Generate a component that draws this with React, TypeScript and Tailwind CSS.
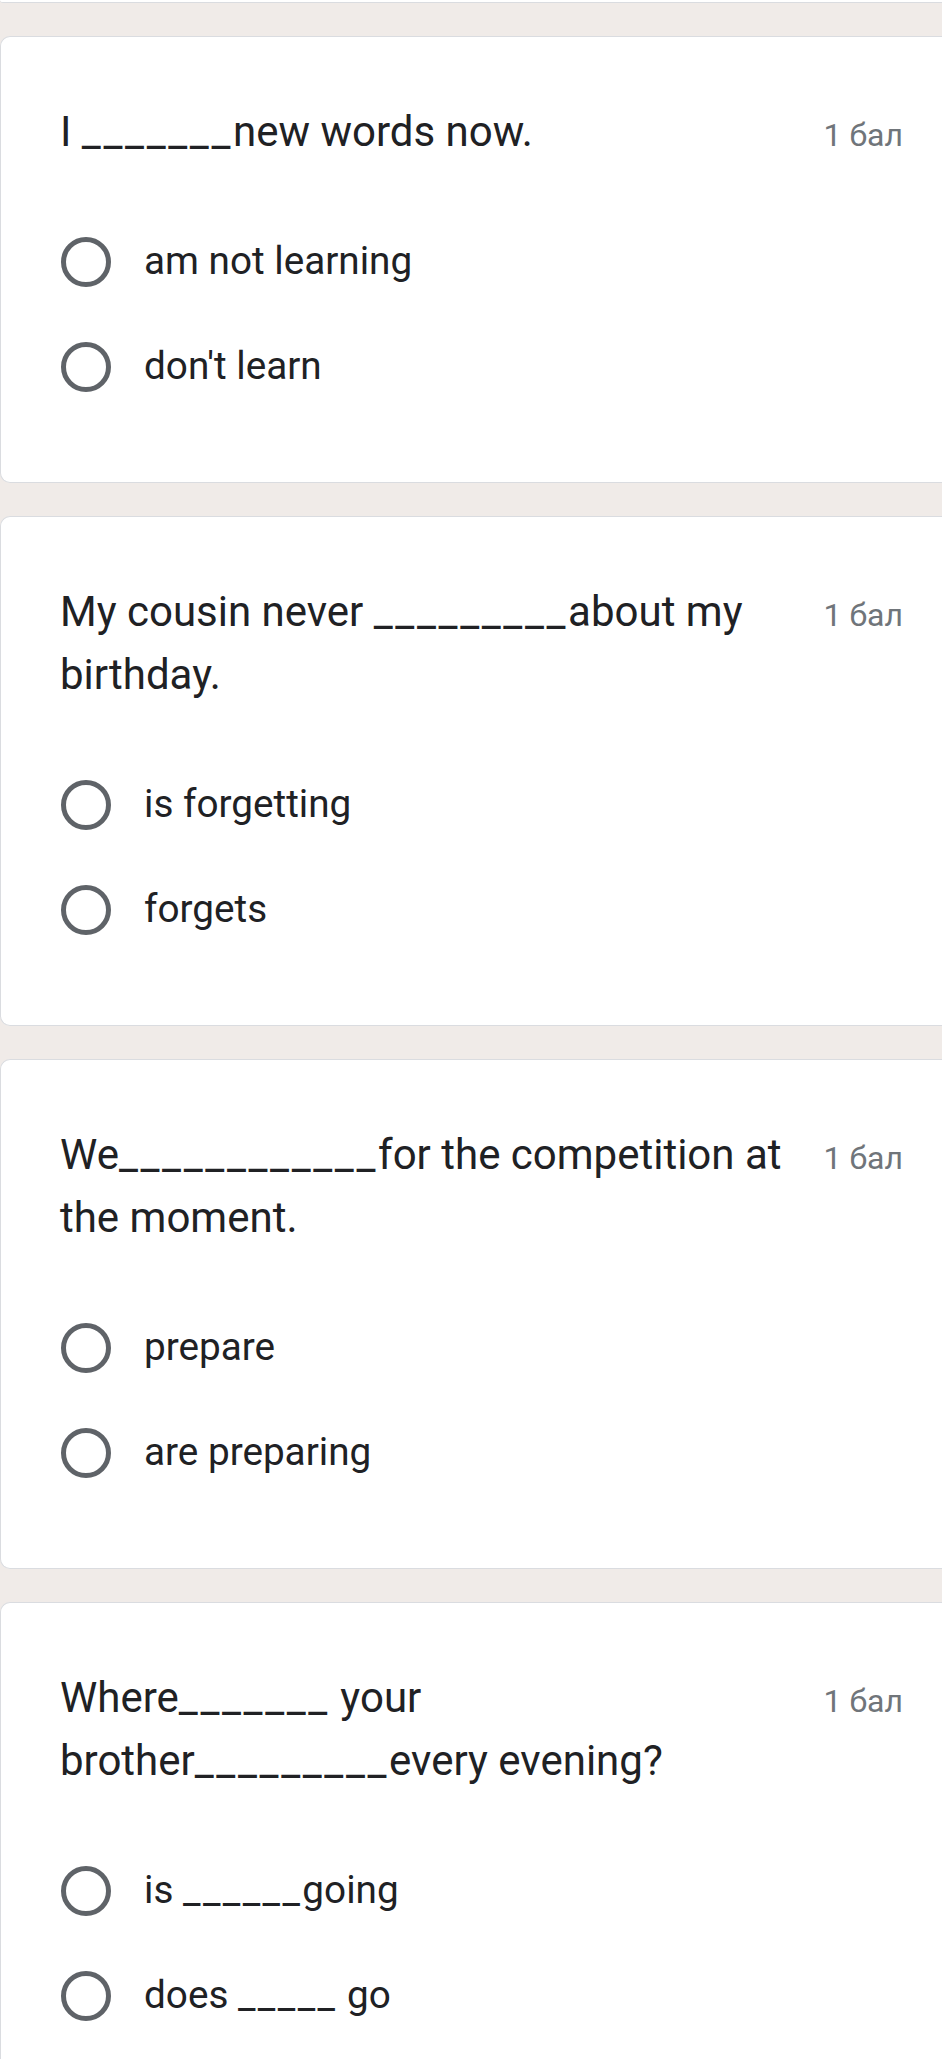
import React from "react";

interface Question {
    title: string;
    options: string[];
}

const questions: Question[] = [
    { title: "I _______new words now.", options: ["am not learning", "don't learn"] },
    { title: "My cousin never _________about my birthday.", options: ["is forgetting", "forgets"] },
    { title: "We____________for the competition at the moment.", options: ["prepare", "are preparing"] },
    { title: "Where_______ your brother_________every evening?", options: ["is ______going", "does _____ go"] },
];

// blanks are drawn as separate dashes, like in the form
function Blanks({ text }: { text: string }) {
    const parts = text.split(/(_+)/);
    return (
        <>
            {parts.map((part, i) =>
                part.startsWith("_") ? (
                    <span key={i} className="tracking-[0.063em]">{part}</span>
                ) : (
                    <React.Fragment key={i}>{part}</React.Fragment>
                )
            )}
        </>
    );
}

function Radio() {
    return <div className="ml-[1px] mr-[33px] h-[50px] w-[50px] shrink-0 rounded-full border-[5px] border-[#5f6368]" />;
}

function QuestionCard({ question }: { question: Question }) {
    return (
        <div className="rounded-l-[10px] border border-r-0 border-[#dadce0] bg-white pl-[59px] pr-[39px] pt-[63px] pb-[63px]">
            <div className="flex items-baseline gap-6">
                <div className="flex-1 text-[42px] leading-[63px] text-[#202124]">
                    <Blanks text={question.title} />
                </div>
                <div className="shrink-0 text-[32px] text-[#70757a]">1 бал</div>
            </div>
            <div className="mt-[46px] flex flex-col">
                {question.options.map((option) => (
                    <div key={option} className="flex h-[105px] items-center">
                        <Radio />
                        <span className="text-[38.7px] text-[#202124]">
                            <Blanks text={option} />
                        </span>
                    </div>
                ))}
            </div>
        </div>
    );
}

export default function App() {
    return (
        <div className="h-[2059px] overflow-hidden bg-[#f0ebe8] font-['Roboto',sans-serif]">
            <div className="mb-[33px] h-[3px] rounded-bl-[10px] border-b border-[#dadce0] bg-white" />
            <div className="flex flex-col gap-[33px]">
                {questions.map((q) => (
                    <QuestionCard key={q.title} question={q} />
                ))}
            </div>
        </div>
    );
}
